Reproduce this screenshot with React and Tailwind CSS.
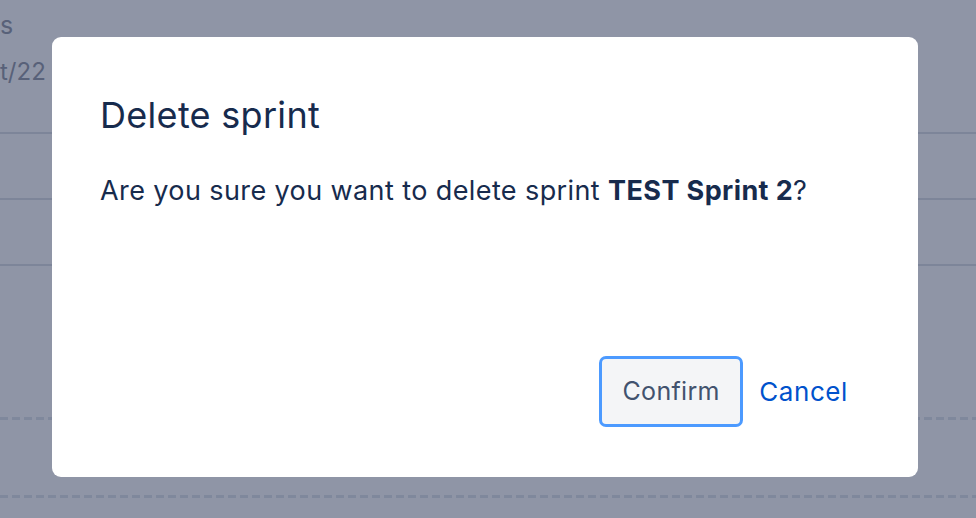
import React from "react";

const font = { fontFamily: "Inter, 'Noto Sans', sans-serif" };

export default function App() {
  return (
    <div className="relative w-[976px] h-[518px] overflow-hidden bg-[#8f95a6]" style={font}>
      {/* ===== page behind the backdrop ===== */}
      <div className="flex flex-col text-[#586179]">
        <div className="h-[132px] flex flex-col pt-[10px]">
          <div className="text-[25px] leading-[30px]">s</div>
          <div className="mt-[17px] text-[24px] leading-[30px]">t/22</div>
        </div>
        <div className="h-[66px] border-t-2 border-[#7d8599]"></div>
        <div className="h-[66px] border-t-2 border-[#7d8599]"></div>
        <div className="h-[153px] border-t-2 border-[#7d8599]"></div>
        <div className="h-[3px] bg-[repeating-linear-gradient(90deg,#7f889c_0_8px,transparent_8px_12px)]"></div>
        <div className="h-[75px]"></div>
        <div className="h-[3px] bg-[repeating-linear-gradient(90deg,#7f889c_0_8px,transparent_8px_12px)]"></div>
      </div>

      {/* ===== modal ===== */}
      <div className="absolute left-[52px] top-[37px] w-[866px] h-[440px] bg-white rounded-[9px] flex flex-col pl-[48px] pr-[58px] pt-[56px] pb-[50px]">
        <h2 className="text-[36px] leading-[44px] text-[#172b4d] font-normal tracking-[0.3px]">Delete sprint</h2>
        <p className="mt-[37px] text-[27px] leading-[34px] text-[#172b4d] tracking-[0.4px]">
          Are you sure you want to delete sprint <span className="font-bold">TEST Sprint 2</span>?
        </p>
        <div className="mt-auto flex justify-end items-center gap-[4px]">
          <button className="w-[144px] h-[71px] rounded-[7px] border-[3px] border-[#4c9aff] bg-[#f4f5f7] text-[25px] text-[#42526e] tracking-[0.3px]">
            Confirm
          </button>
          <button className="h-[71px] px-[12px] text-[26px] text-[#0052cc] tracking-[0.6px]">Cancel</button>
        </div>
      </div>
    </div>
  );
}
